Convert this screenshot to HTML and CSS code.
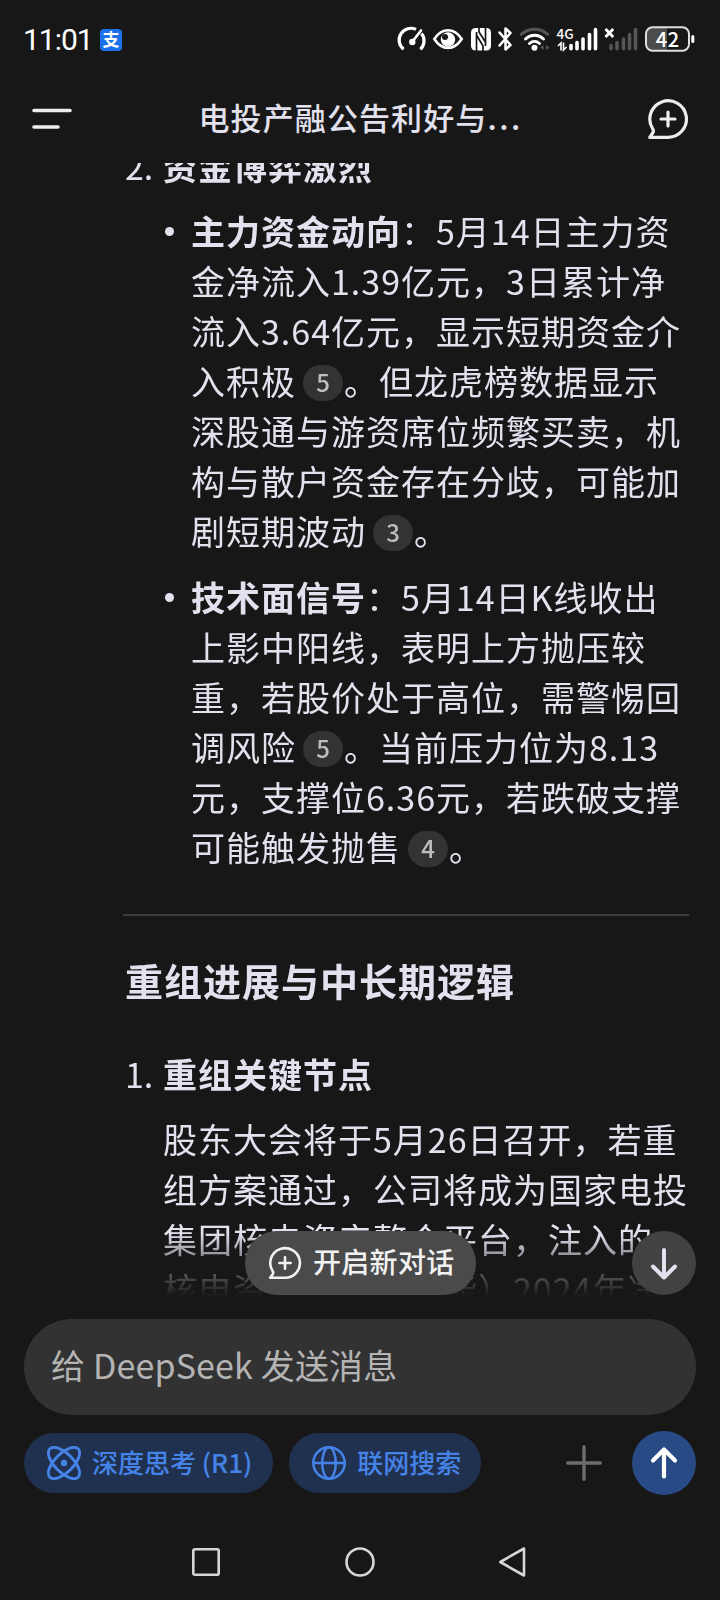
FILE: index.html
```
<!DOCTYPE html>
<html lang="zh-CN">
<head>
  <meta charset="utf-8">
  <title>电投产融公告利好与...</title>
  <link rel="stylesheet" href="styles.css">
</head>
<body>

  <div class="status">
    <span class="clock">11:01</span>
    <span class="alipay">支</span>
    <div class="status-icons">
      <!-- speed -->
      <svg width="34" height="30" viewBox="396 24 34 30" fill="none" stroke="#fff" stroke-width="3">
        <path d="M403.600 49.300A11.800 11.800 0 0 1 416 29.400M421.500 33.500A11.800 11.800 0 0 1 420.400 49.300" stroke-width="3.200"/>
        <path d="M421 30.500L412.500 41.500" stroke-linecap="round" stroke-width="2.600"/>
        <circle cx="412.300" cy="42" r="3.200" fill="#fff" stroke="none"/>
      </svg>
      <!-- eye -->
      <svg width="36" height="30" viewBox="430 24 36 30" fill="none" stroke="#fff" stroke-width="2.600">
        <path d="M434.300 39C438 33.500 443 30.300 448 30.300S458 33.500 461.700 39C458 44.700 453 47.900 448 47.900S438 44.700 434.300 39Z"/>
        <circle cx="448" cy="39.500" r="7.200" fill="#fff" stroke="none"/>
        <circle cx="445" cy="37" r="3" fill="#171717" stroke="none"/>
      </svg>
      <!-- nfc -->
      <svg width="28" height="30" viewBox="466 24 28 30">
        <rect x="471" y="28" width="20" height="22.500" rx="4.500" fill="#fff"/>
        <path d="M476.500 51V32M485.500 28V46M479 28V32L486 43M476.500 35L483 46V51" fill="none" stroke="#171717" stroke-width="1.700"/>
      </svg>
      <!-- bluetooth -->
      <svg width="22" height="30" viewBox="494 24 22 30" fill="none" stroke="#fff" stroke-width="2.500">
        <path d="M499.500 32.500L510.500 45L505.500 49.500V28.500L510.500 33L499.500 45.500" stroke-linejoin="round" stroke-linecap="round"/>
      </svg>
      <!-- wifi -->
      <svg width="38" height="30" viewBox="516 24 38 30" fill="none" stroke="#fff" stroke-width="2.900" stroke-linecap="round">
        <path d="M521.300 34.300C529 27.500 540 27.500 547.700 34.300" stroke="#555"/>
        <path d="M525.500 39C531 34 538 34 543.500 39M529.500 43.500C532.500 40.800 536.500 40.800 539.500 43.500"/>
        <circle cx="534.500" cy="47.700" r="3" fill="#fff" stroke="none"/>
        <path d="M540 47.500L543.500 45V50ZM549.500 47.500L546 45V50Z" fill="#555" stroke="none"/>
      </svg>
      <!-- sim 1 -->
      <svg width="46" height="30" viewBox="554 24 46 30">
        <text x="556.500" y="38.500" class="net">4G</text>
        <path d="M561 50.500V43L558 46M563.500 42.500V50L566.500 47" fill="none" stroke="#fff" stroke-width="1.600"/>
        <path d="M571 45.500V48.800M577 42.500V48.800M583 39V48.800M589.500 34.500V48.800M595.500 29.500V48.800" stroke="#fff" stroke-width="3.600" stroke-linecap="round"/>
      </svg>
      <!-- sim 2 -->
      <svg width="42" height="30" viewBox="600 24 42 30" stroke-linecap="round">
        <path d="M605.500 29L613.200 37M613.200 29L605.500 37" stroke="#fff" stroke-width="2.800" stroke-linecap="butt"/>
        <path d="M611 45.500V48.800M617 42.500V48.800M623.500 39V48.800M629.500 34.500V48.800M635.500 29.500V48.800" stroke="#555" stroke-width="3.600"/>
      </svg>
      <!-- battery -->
      <svg width="54" height="30" viewBox="642 24 54 30">
        <path d="M652 28H667V50H652Q647 50 647 44V34Q647 28 652 28Z" fill="#4c4c4c"/>
        <rect x="646" y="27.300" width="43" height="23.400" rx="6.500" fill="none" stroke="#ddd" stroke-width="2"/>
        <rect x="691.300" y="35" width="3" height="8" rx="1.500" fill="#fff"/>
        <text x="667.500" y="46.800" class="charge">42</text>
      </svg>
    </div>
  </div>

  <div class="header">
    <svg class="menu" width="42" height="42" viewBox="0 0 42 42" stroke="#ededed" stroke-width="3.600" stroke-linecap="round">
      <path d="M2 12.500H38M2 29H26"/>
    </svg>
    <h1>电投产融公告利好与<span class="dots">...</span></h1>
    <svg class="new" width="42" height="42" viewBox="0 0 42 42" fill="none" stroke="#ededed" stroke-width="3.200" stroke-linecap="round" stroke-linejoin="round">
      <path d="M21 39.300A18.300 18.300 0 1 0 5.500 30.500Q7 32.500 6 34.500L2.800 39.300Z"/>
      <path d="M21 14V28M14 21H28"/>
    </svg>
  </div>

  <div class="chat">
    <div class="answer">
      <div class="item"><span class="num">2.</span><b>资金博弈激烈</b></div>
      <ul>
        <li>
          <b>主力资金动向</b>：5月14日主力资<br>
          金净流入1.39亿元，3日累计净<br>
          流入3.64亿元，显示短期资金介<br>
          入积极<span class="cite">5</span>。但龙虎榜数据显示<br>
          深股通与游资席位频繁买卖，机<br>
          构与散户资金存在分歧，可能加<br>
          剧短期波动<span class="cite">3</span>。
        </li>
        <li>
          <b>技术面信号</b>：5月14日K线收出<br>
          上影中阳线，表明上方抛压较<br>
          重，若股价处于高位，需警惕回<br>
          调风险<span class="cite">5</span>。当前压力位为8.13<br>
          元，支撑位6.36元，若跌破支撑<br>
          可能触发抛售<span class="cite">4</span>。
        </li>
      </ul>
      <hr>
      <h2>重组进展与中长期逻辑</h2>
      <div class="item"><span class="num">1.</span><b>重组关键节点</b></div>
      <p>
        股东大会将于5月26日召开，若重<br>
        组方案通过，公司将成为国家电投<br>
        集团核电资产整合平台，注入的<br>
        核电资产（电投核能）2024年净
      </p>
    </div>
  </div>

  <div class="new-chat">
    <svg width="34" height="34" viewBox="0 0 42 42" fill="none" stroke="#f2f2f2" stroke-width="3.200" stroke-linecap="round" stroke-linejoin="round">
      <path d="M21 39.300A18.300 18.300 0 1 0 5.500 30.500Q7 32.500 6 34.500L2.800 39.300Z"/>
      <path d="M21 14V28M14 21H28"/>
    </svg>
    <span>开启新对话</span>
  </div>
  <div class="to-bottom">
    <svg width="64" height="64" viewBox="0 0 64 64" fill="none" stroke="#e2e1ee" stroke-width="4" stroke-linecap="round" stroke-linejoin="round">
      <path d="M32 19V46M21 35.500L32 46.500L43 35.500"/>
    </svg>
  </div>

  <div class="composer">给 DeepSeek 发送消息</div>

  <div class="tools">
    <div class="chip">
      <svg width="34" height="34" viewBox="0 0 34 34" fill="none" stroke="#4583e8" stroke-width="2.800">
        <ellipse cx="17" cy="17" rx="20" ry="9.300" transform="rotate(45 17 17)"/>
        <ellipse cx="17" cy="17" rx="20" ry="9.300" transform="rotate(-45 17 17)"/>
        <circle cx="17" cy="17" r="3.200" fill="#4583e8" stroke="none"/>
      </svg>
      <span>深度思考 (R1)</span>
    </div>
    <div class="chip">
      <svg width="34" height="34" viewBox="0 0 34 34" fill="none" stroke="#4583e8" stroke-width="2.500">
        <circle cx="17" cy="17" r="15.700"/>
        <ellipse cx="17" cy="17" rx="6.800" ry="15.700"/>
        <path d="M1.500 17H32.500"/>
      </svg>
      <span>联网搜索</span>
    </div>
    <svg class="plus" width="36" height="36" viewBox="0 0 36 36" stroke="#6d6d6d" stroke-width="3.400" stroke-linecap="round">
      <path d="M18 1.700V34.300M1.700 18H34.300"/>
    </svg>
    <div class="send">
      <svg width="64" height="64" viewBox="0 0 64 64" fill="none" stroke="#fff" stroke-width="4.200" stroke-linecap="round" stroke-linejoin="round">
        <path d="M32 45.500V18.500M21 29.500L32 18.500L43 29.500"/>
      </svg>
    </div>
  </div>

  <div class="navbar">
    <svg width="30" height="32" viewBox="0 0 30 32" fill="none" stroke="#d6d6d6" stroke-width="2.600">
      <rect x="2.300" y="2.300" width="25.400" height="25.400" rx="1.500"/>
    </svg>
    <svg width="32" height="32" viewBox="0 0 32 32" fill="none" stroke="#d6d6d6" stroke-width="2.600">
      <circle cx="16" cy="15" r="13.500"/>
    </svg>
    <svg width="30" height="32" viewBox="0 0 30 32" fill="none" stroke="#d6d6d6" stroke-width="2.600" stroke-linejoin="round">
      <path d="M25 1.500V28.500L1.300 15Z"/>
    </svg>
  </div>

</body>
</html>
```
FILE: styles.css
```
* { box-sizing: border-box; }
body {
  position: relative;
  width: 720px;
  height: 1600px;
  margin: 0;
  overflow: hidden;
  background: #171717;
  color: #e2e1ee;
  font-family: "Noto Sans CJK SC", sans-serif;
}
svg { display: block; flex: none; }

/* status bar */
.status {
  display: flex;
  align-items: center;
  height: 78px;
  padding: 0 24px 0 23px;
}
.clock {
  width: 77px;
  padding-top: 2px;
  color: #fff;
  font: 30px/30px Roboto, sans-serif;
  letter-spacing: -1px;
  white-space: nowrap;
}
.alipay {
  width: 22px;
  height: 22px;
  margin-top: 2px;
  border-radius: 4px;
  background: #1c70ea;
  color: #fff;
  font-size: 17px;
  font-weight: 700;
  line-height: 20px;
  text-align: center;
}
.status-icons { display: flex; margin-left: auto; }
.net { fill: #fff; font: 500 13.500px "Noto Sans CJK SC", sans-serif; }
.charge {
  fill: #fff;
  font: 500 20.500px "Noto Sans CJK SC", sans-serif;
  text-anchor: middle;
}

/* header */
.header {
  display: flex;
  align-items: center;
  justify-content: space-between;
  height: 85px;
  padding: 0 31px 4px 32px;
}
h1 {
  width: 324px;
  margin: 0;
  padding-bottom: 4px;
  font-size: 31px;
  font-weight: 500;
  line-height: 46px;
  letter-spacing: 1.100px;
  white-space: nowrap;
}
.dots { letter-spacing: 2.500px; }

/* messages, scrolled so the first row is cut */
.chat {
  height: 1134px;
  overflow: hidden;
  -webkit-mask-image: linear-gradient(#000 1070px, rgba(0,0,0,.35) 1108px, transparent 1134px);
  mask-image: linear-gradient(#000 1070px, rgba(0,0,0,.35) 1108px, transparent 1134px);
}
.answer {
  margin: -22px 31px 0 123px;
  font-size: 34px;
  line-height: 50px;
  letter-spacing: 1px;
  white-space: nowrap;
}
.item { display: flex; }
.num { width: 40px; padding-left: 2px; letter-spacing: 0; }
ul { margin: 15px 0 0; padding: 0 0 0 68px; list-style: none; }
li { position: relative; margin-bottom: 16px; }
li::before {
  content: "";
  position: absolute;
  left: -26px;
  top: 21px;
  width: 9px;
  height: 9px;
  border-radius: 50%;
  background: #e2e1ee;
}
.cite {
  display: inline-block;
  width: 40px;
  height: 36px;
  margin: 0 1px 0 7px;
  border-radius: 18px;
  background: #333;
  color: #bdbdbd;
  font-size: 24px;
  font-weight: 500;
  line-height: 34px;
  letter-spacing: 0;
  text-align: center;
  vertical-align: 3px;
}
hr { height: 2px; margin: 42px 0 0; border: 0; background: #3c3c3c; }
h2 {
  margin: 36px 0 41px 2px;
  font-size: 38px;
  line-height: 56px;
}
p { margin: 15px 0 0 40px; }

/* floating buttons */
.new-chat {
  position: absolute;
  left: 245px;
  top: 1231px;
  display: flex;
  align-items: center;
  gap: 11px;
  width: 231px;
  height: 64px;
  padding-left: 23px;
  border-radius: 32px;
  background: #4a4a4a;
  color: #f2f2f2;
  font-size: 28px;
  font-weight: 500;
  letter-spacing: .3px;
  white-space: nowrap;
}
.new-chat span, .chip span { padding-bottom: 4px; }
.to-bottom {
  position: absolute;
  left: 632px;
  top: 1231px;
  border-radius: 50%;
  background: #424242;
}

/* input */
.composer {
  height: 96px;
  margin: 22px 24px 0;
  padding-left: 27px;
  border-radius: 48px;
  background: #323232;
  color: #b4b4b4;
  font-size: 34px;
  line-height: 92px;
  letter-spacing: .15px;
}
.tools {
  display: flex;
  align-items: center;
  gap: 16px;
  height: 64px;
  margin: 16px 24px 0;
}
.chip {
  display: flex;
  align-items: center;
  gap: 11px;
  height: 60px;
  padding: 0 20px 0 23px;
  border-radius: 30px;
  background: #20314f;
  color: #4583e8;
  font-size: 26px;
  font-weight: 500;
  white-space: nowrap;
}
.chip:first-child { padding-right: 21px; }
.plus { margin: 0 14px 0 auto; }
.send { border-radius: 50%; background: #294b85; }

.navbar {
  display: flex;
  justify-content: center;
  gap: 123px;
  padding-top: 52px;
}
```
